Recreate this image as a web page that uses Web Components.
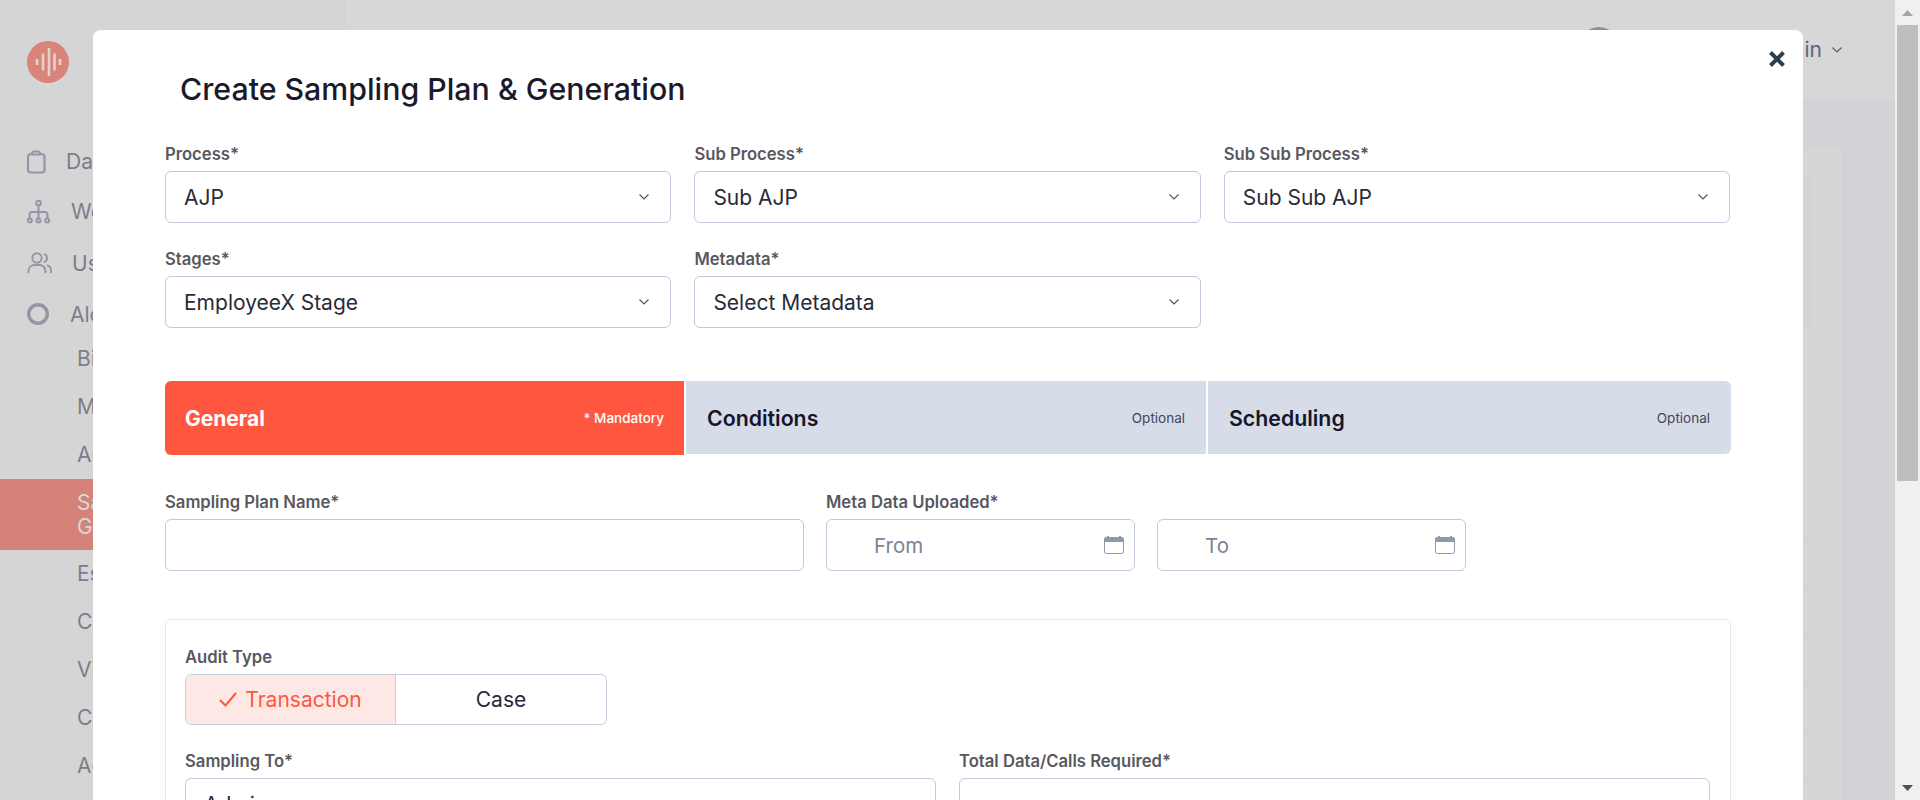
<!DOCTYPE html>
<html lang="en">
<head>
<meta charset="utf-8">
<title>Create Sampling Plan &amp; Generation</title>
<style>
   html, body { margin: 0; padding: 0; height: 100%; overflow: hidden; font-family: Inter, "Liberation Sans", sans-serif; }
</style>
</head>
<body>
<app-page>
   <side-nav slot="side">
      <nav-item icon="clipboard">Dat</nav-item>
      <nav-item icon="tree">Wo</nav-item>
      <nav-item icon="users">Us</nav-item>
      <nav-item icon="circle">Alc</nav-item>
      <nav-item sub>Bi</nav-item>
      <nav-item sub>M</nav-item>
      <nav-item sub>Au</nav-item>
      <nav-item sub active>Sa<br>Ge</nav-item>
      <nav-item sub>Es</nav-item>
      <nav-item sub>Ca</nav-item>
      <nav-item sub>Vi</nav-item>
      <nav-item sub>Ca</nav-item>
      <nav-item sub>Ag</nav-item>
   </side-nav>
   <top-bar slot="top">Admin</top-bar>
   <back-panel slot="main"></back-panel>

   <modal-dialog slot="modal" heading="Create Sampling Plan &amp; Generation">
      <form-grid>
         <form-field label="Process*"><form-select>AJP</form-select></form-field>
         <form-field label="Sub Process*"><form-select>Sub AJP</form-select></form-field>
         <form-field label="Sub Sub Process*"><form-select>Sub Sub AJP</form-select></form-field>
         <form-field label="Stages*"><form-select>EmployeeX Stage</form-select></form-field>
         <form-field label="Metadata*"><form-select>Select Metadata</form-select></form-field>
      </form-grid>

      <step-tabs>
         <step-tab active note="* Mandatory">General</step-tab>
         <step-tab note="Optional">Conditions</step-tab>
         <step-tab note="Optional">Scheduling</step-tab>
      </step-tabs>

      <plan-row>
         <form-field label="Sampling Plan Name*"><form-select plain></form-select></form-field>
         <form-field label="Meta Data Uploaded*"><date-input>From</date-input></form-field>
         <form-field label="&nbsp;"><date-input>To</date-input></form-field>
      </plan-row>

      <audit-card>
         <form-field label="Audit Type" class="wide"><seg-toggle></seg-toggle></form-field>
         <form-field label="Sampling To*"><form-select>Admin</form-select></form-field>
         <form-field label="Total Data/Calls Required*"><form-select plain></form-select></form-field>
      </audit-card>
   </modal-dialog>

   <scroll-strip slot="scroll"></scroll-strip>
</app-page>

<script>
class AppPage extends HTMLElement {
   constructor() {
      super();
      this.shadowDOM = this.attachShadow({ mode: 'open' });
   }

   connectedCallback() {
      this.shadowDOM.innerHTML = `
         <style>
            :host {
               display: grid;
               grid-template-columns: 345px 1fr 25px;
               grid-template-rows: 100px 1fr;
               height: 100vh;
               position: relative;
               overflow: hidden;
               background: #d2d3d7;
            }
            .side { grid-row: 1 / 3; grid-column: 1; display: block; }
            .top { grid-row: 1; grid-column: 2; display: block; }
            .main { grid-row: 2; grid-column: 2; min-height: 0; display: block; }
            .scroll { grid-row: 1 / 3; grid-column: 3; display: block; }
         </style>
         <div class="side"><slot name="side"></slot></div>
         <div class="top"><slot name="top"></slot></div>
         <div class="main"><slot name="main"></slot></div>
         <div class="scroll"><slot name="scroll"></slot></div>
         <slot name="modal"></slot>
      `;
   }
}

class SideNav extends HTMLElement {
   constructor() {
      super();
      this.shadowDOM = this.attachShadow({ mode: 'open' });
   }

   connectedCallback() {
      this.shadowDOM.innerHTML = `
         <style>
            :host {
               display: block;
               height: 100%;
               background: #d5d5d5;
               border-right: 1px solid #d2d2d2;
               box-sizing: border-box;
               overflow: hidden;
            }
            .logo {
               display: block;
               margin: 41px 0 0 27px;
               width: 42px;
               height: 42px;
            }
            .list { margin-top: 53px; }
         </style>
         <svg class="logo" viewBox="0 0 42 42">
            <circle cx="21" cy="21" r="21" fill="#d9837a"/>
            <path d="M10 18v6M16 12.500v17M22 7v28M27.500 12.500v17M33 18v6" stroke="#e6d2cd" stroke-width="2.600" fill="none"/>
         </svg>
         <div class="list"><slot></slot></div>
      `;
   }
}

const NAV_ICONS = {
   clipboard: '<path d="M5.500 4H4a3 3 0 0 0-3 3v13a2.500 2.500 0 0 0 2.500 2.500h11.500a2.500 2.500 0 0 0 2.500-2.500V7a3 3 0 0 0-3-3h-1.500" stroke-width="2.200"/><path d="M7 1.500h4A2 2 0 0 1 13 3.500v1H5v-1A2 2 0 0 1 7 1.500z" stroke-width="2"/>',
   tree: '<circle cx="11.500" cy="3" r="2.300"/><path d="M11.500 5.300V18.500M11.500 12H5a2.500 2.500 0 0 0-2.500 2.500v4M11.500 12H18a2.500 2.500 0 0 1 2.500 2.500v4" stroke-width="2"/><circle cx="2.800" cy="20.500" r="2"/><circle cx="11.500" cy="20.500" r="2"/><circle cx="20.200" cy="20.500" r="2"/>',
   users: '<circle cx="10" cy="6" r="4.700"/><path d="M1.500 21v-2.500A6 6 0 0 1 7.500 13h5a6 6 0 0 1 6 6v2M17 1.800a4.500 4.500 0 0 1 0 8.500M20 13.200a6 6 0 0 1 4 5.600v2.200"/>',
   circle: '<circle cx="11" cy="11" r="9.300" stroke-width="3.400"/>'
};

class NavItem extends HTMLElement {
   constructor() {
      super();
      this.shadowDOM = this.attachShadow({ mode: 'open' });
   }

   connectedCallback() {
      const icon = this.getAttribute('icon');
      const iconMarkup = icon
         ? `<svg viewBox="0 0 26 24" width="26" height="24" fill="none" stroke="#9694a6" stroke-width="1.900">${NAV_ICONS[icon]}</svg>`
         : '';
      this.shadowDOM.innerHTML = `
         <style>
            :host {
               display: block;
               font-family: Inter, "Liberation Sans", sans-serif;
               font-size: 21px;
               line-height: 24px;
               color: #7c7d8a;
            }
            .row {
               display: flex;
               align-items: center;
               padding-left: 27px;
               gap: 13px;
               height: 51px;
            }
            :host([icon="tree"]) .row { gap: 18px; height: 52px; margin-top: -1px; }
            :host([icon="users"]) .row { gap: 19px; height: 51px; }
            :host([icon="circle"]) .row { gap: 17px; height: 51px; }
            :host([sub]) .row { padding-left: 77px; height: 48px; }
            :host([icon="circle"]) { margin-bottom: -5px; }
            :host([active]) { background: #d5827a; color: #dbd7d6; }
            :host([active]) .row { height: 71px; }
         </style>
         <div class="row">${iconMarkup}<span><slot></slot></span></div>
      `;
   }
}

class TopBar extends HTMLElement {
   constructor() {
      super();
      this.shadowDOM = this.attachShadow({ mode: 'open' });
   }

   connectedCallback() {
      this.shadowDOM.innerHTML = `
         <style>
            :host {
               display: flex;
               height: 100px;
               align-items: flex-start;
               justify-content: flex-end;
               padding: 27px 53px 0 0;
               box-sizing: border-box;
               background: #d7d7d7;
               font-family: Inter, "Liberation Sans", sans-serif;
               font-size: 21px;
               line-height: 46px;
               color: #5f6384;
            }
            .avatar {
               width: 40px;
               height: 40px;
               border-radius: 50%;
               background: #8b8ea1;
               margin-right: 140px;
            }
            svg { margin: 20px 0 0 10px; }
         </style>
         <div class="avatar"></div>
         <span><slot></slot></span>
         <svg width="10" height="6" viewBox="0 0 10 6" fill="none" stroke="#5f5f66" stroke-width="1.200"><path d="M.5.500 5 5l4.500-4.500"/></svg>
      `;
   }
}

class BackPanel extends HTMLElement {
   constructor() {
      super();
      this.shadowDOM = this.attachShadow({ mode: 'open' });
   }

   connectedCallback() {
      this.shadowDOM.innerHTML = `
         <style>
            :host { display: block; height: 100%; padding: 46px 53px 0 38px; box-sizing: border-box; }
            .card {
               height: 100%;
               background: #d6d6d6;
               border-radius: 6px 6px 0 0;
               padding: 30px 30px 0 30px;
               box-sizing: border-box;
            }
            .head { height: 150px; background: #d2d3d7; border-radius: 6px; margin-bottom: 215px; }
            .line { height: 47.500px; border-top: 1px solid #cfcfcf; box-sizing: border-box; }
         </style>
         <div class="card">
            <div class="head"></div>
            <div class="line"></div><div class="line"></div><div class="line"></div>
            <div class="line"></div><div class="line"></div><div class="line"></div>
         </div>
      `;
   }
}

class ModalDialog extends HTMLElement {
   constructor() {
      super();
      this.shadowDOM = this.attachShadow({ mode: 'open' });
   }

   connectedCallback() {
      this.shadowDOM.innerHTML = `
         <style>
            :host {
               position: absolute;
               left: 93px;
               top: 30px;
               width: 1710px;
               height: 770px;
               overflow: hidden;
               background: #fff;
               border-radius: 8px 8px 0 0;
               box-sizing: border-box;
               padding: 41px 72px 0 72px;
               font-family: Inter, "Liberation Sans", sans-serif;
            }
            h1 {
               margin: 0 0 37px 15px;
               font-size: 30.300px;
               line-height: 36px;
               font-weight: 500;
               color: #1a1a2b;
            }
            .close {
               position: absolute;
               right: 18px;
               top: 21px;
               width: 16px;
               height: 16px;
            }
         </style>
         <svg class="close" viewBox="0 0 16 16" stroke="#2c3e50" stroke-width="4"><path d="M1.500 1.500l13 13M14.500 1.500l-13 13"/></svg>
         <h1>${this.getAttribute('heading').replace('&', '&amp;')}</h1>
         <slot></slot>
      `;
   }
}

class FormGrid extends HTMLElement {
   constructor() {
      super();
      this.shadowDOM = this.attachShadow({ mode: 'open' });
   }

   connectedCallback() {
      this.shadowDOM.innerHTML = `
         <style>
            :host {
               display: grid;
               grid-template-columns: repeat(3, 506.400px);
               column-gap: 23px;
               row-gap: 26px;
            }
         </style>
         <slot></slot>
      `;
   }
}

class FormField extends HTMLElement {
   constructor() {
      super();
      this.shadowDOM = this.attachShadow({ mode: 'open' });
   }

   connectedCallback() {
      this.shadowDOM.innerHTML = `
         <style>
            :host { display: block; min-width: 0; }
            label {
               display: block;
               font-size: 16.650px;
               line-height: 20px;
               font-weight: 600;
               color: #58585e;
               margin-bottom: 7px;
            }
         </style>
         <label>${this.getAttribute('label')}</label>
         <slot></slot>
      `;
   }
}

class FormSelect extends HTMLElement {
   constructor() {
      super();
      this.shadowDOM = this.attachShadow({ mode: 'open' });
   }

   connectedCallback() {
      const chevron = this.hasAttribute('plain') ? '' : `
         <svg width="10" height="6" viewBox="0 0 10 6" fill="none" stroke="#555" stroke-width="1.200"><path d="M.5.500 5 5l4.500-4.500"/></svg>`;
      this.shadowDOM.innerHTML = `
         <style>
            :host {
               display: flex;
               align-items: center;
               justify-content: space-between;
               height: 52px;
               box-sizing: border-box;
               padding: 0 21px 0 18px;
               border: 1px solid #c1cadb;
               border-radius: 6px;
               background: #fff;
               font-size: 21px;
               color: #2a2a38;
            }
         </style>
         <span><slot></slot></span>${chevron}
      `;
   }
}

class DateInput extends HTMLElement {
   constructor() {
      super();
      this.shadowDOM = this.attachShadow({ mode: 'open' });
   }

   connectedCallback() {
      this.shadowDOM.innerHTML = `
         <style>
            :host {
               display: flex;
               align-items: center;
               justify-content: space-between;
               height: 52px;
               box-sizing: border-box;
               padding: 0 10px 0 47px;
               border: 1px solid #c1cadb;
               border-radius: 6px;
               font-size: 20.500px;
               color: #7a8496;
            }
         </style>
         <span><slot></slot></span>
         <svg width="20" height="18" viewBox="0 0 20 18">
            <path d="M.5 5.500V15.500a2 2 0 0 0 2 2h15a2 2 0 0 0 2-2V5.500z" fill="none" stroke="#8f98ad"/>
            <path d="M0 3a2 2 0 0 1 2-2h1V0h2v1h10V0h2v1h1a2 2 0 0 1 2 2v3H0z" fill="#8f98ad"/>
         </svg>
      `;
   }
}

class StepTabs extends HTMLElement {
   constructor() {
      super();
      this.shadowDOM = this.attachShadow({ mode: 'open' });
   }

   connectedCallback() {
      this.shadowDOM.innerHTML = `
         <style>
            :host {
               display: grid;
               grid-template-columns: 519px 520px 1fr;
               column-gap: 2px;
               margin-top: 53px;
               align-items: start;
               width: 1566px;
            }
            ::slotted(:first-child) { border-radius: 6px 0 0 6px; }
            ::slotted(:last-child) { border-radius: 0 6px 6px 0; }
         </style>
         <slot></slot>
      `;
   }
}

class StepTab extends HTMLElement {
   constructor() {
      super();
      this.shadowDOM = this.attachShadow({ mode: 'open' });
   }

   connectedCallback() {
      this.shadowDOM.innerHTML = `
         <style>
            :host {
               display: flex;
               align-items: center;
               justify-content: space-between;
               height: 73px;
               box-sizing: border-box;
               padding: 0 21px 0 21px;
               background: #d7dde8;
               color: #16162a;
            }
            :host([active]) {
               height: 74px;
               background: #ff573f;
               color: #fff;
               padding: 0 20px 0 20px;
            }
            b { font-size: 21.300px; font-weight: 600; }
            :host([active]) b { font-weight: 700; font-size: 21px; }
            small { font-size: 13.500px; color: #43465a; }
            :host([active]) small { color: #fff; font-weight: 500; }
         </style>
         <b><slot></slot></b>
         <small>${this.getAttribute('note')}</small>
      `;
   }
}

class PlanRow extends HTMLElement {
   constructor() {
      super();
      this.shadowDOM = this.attachShadow({ mode: 'open' });
   }

   connectedCallback() {
      this.shadowDOM.innerHTML = `
         <style>
            :host {
               display: grid;
               grid-template-columns: 639px 309px 309px;
               column-gap: 22px;
               margin-top: 37px;
            }
         </style>
         <slot></slot>
      `;
   }
}

class AuditCard extends HTMLElement {
   constructor() {
      super();
      this.shadowDOM = this.attachShadow({ mode: 'open' });
   }

   connectedCallback() {
      this.shadowDOM.innerHTML = `
         <style>
            :host {
               display: grid;
               grid-template-columns: 751px 751px;
               column-gap: 23px;
               row-gap: 26px;
               width: 1566px;
               height: 400px;
               box-sizing: border-box;
               margin-top: 48px;
               padding: 27px 20px 0 19px;
               border: 1px solid #e6e9f1;
               border-radius: 6px;
               align-content: start;
            }
            ::slotted(.wide) { grid-column: 1 / 3; }
         </style>
         <slot></slot>
      `;
   }
}

class SegToggle extends HTMLElement {
   constructor() {
      super();
      this.shadowDOM = this.attachShadow({ mode: 'open' });
   }

   connectedCallback() {
      this.shadowDOM.innerHTML = `
         <style>
            :host {
               display: grid;
               grid-template-columns: 210px 1fr;
               width: 422px;
               height: 51px;
               box-sizing: border-box;
               border: 1px solid #c8cede;
               border-radius: 6px;
               overflow: hidden;
               font-size: 21px;
            }
            div {
               display: flex;
               align-items: center;
               justify-content: center;
               gap: 8px;
               color: #2a2a38;
            }
            .on {
               background: #fde8e6;
               color: #ff573f;
               border-right: 1px solid #c8cede;
            }
         </style>
         <div class="on">
            <svg width="18" height="15" viewBox="0 0 18 15" fill="none" stroke="#ff573f" stroke-width="2"><path d="M1 8l5.500 5.500L17 1"/></svg>
            <span>Transaction</span>
         </div>
         <div>Case</div>
      `;
   }
}

class ScrollStrip extends HTMLElement {
   constructor() {
      super();
      this.shadowDOM = this.attachShadow({ mode: 'open' });
   }

   connectedCallback() {
      this.shadowDOM.innerHTML = `
         <style>
            :host {
               display: flex;
               flex-direction: column;
               height: 100%;
               background: #f0f0f0;
               padding: 0 2px;
               box-sizing: border-box;
            }
            .arrow { height: 25px; display: flex; align-items: center; justify-content: center; }
            .thumb { height: 456px; background: #bebebe; }
            .rest { flex: 1; }
         </style>
         <div class="arrow"><svg width="11" height="6"><path d="M5.500 0 11 6H0z" fill="#a3a3a3"/></svg></div>
         <div class="thumb"></div>
         <div class="rest"></div>
         <div class="arrow"><svg width="11" height="6"><path d="M0 0h11L5.500 6z" fill="#505050"/></svg></div>
      `;
   }
}

customElements.define('app-page', AppPage);
customElements.define('side-nav', SideNav);
customElements.define('nav-item', NavItem);
customElements.define('top-bar', TopBar);
customElements.define('back-panel', BackPanel);
customElements.define('modal-dialog', ModalDialog);
customElements.define('form-grid', FormGrid);
customElements.define('form-field', FormField);
customElements.define('form-select', FormSelect);
customElements.define('date-input', DateInput);
customElements.define('step-tabs', StepTabs);
customElements.define('step-tab', StepTab);
customElements.define('plan-row', PlanRow);
customElements.define('audit-card', AuditCard);
customElements.define('seg-toggle', SegToggle);
customElements.define('scroll-strip', ScrollStrip);
</script>
</body>
</html>
